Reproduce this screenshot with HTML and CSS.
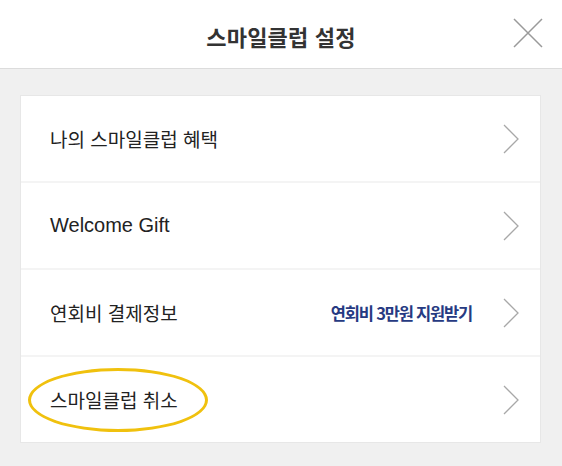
FILE: index.html
```html
<!DOCTYPE html>
<html lang="ko">
<head>
<meta charset="utf-8">
<title>스마일클럽 설정</title>
<link rel="stylesheet" href="styles.css">
</head>
<body>
<header class="topbar">
  <h1 class="title">스마일클럽 설정</h1>
  <button class="close" aria-label="닫기">
    <svg width="30" height="30" viewBox="0 0 30 30"><path d="M1 1 L29 29 M29 1 L1 29" stroke="#9a9a9a" stroke-width="1.5" fill="none"/></svg>
  </button>
</header>
<main class="content">
  <ul class="card">
    <li class="row">
      <span class="label">나의 스마일클럽 혜택</span>
      <span class="chev"><svg width="16" height="30" viewBox="0 0 16 30"><path d="M1 1 L15 15 L1 29" stroke="#a8a8a8" stroke-width="1.3" fill="none"/></svg></span>
    </li>
    <li class="row">
      <span class="label latin">Welcome Gift</span>
      <span class="chev"><svg width="16" height="30" viewBox="0 0 16 30"><path d="M1 1 L15 15 L1 29" stroke="#a8a8a8" stroke-width="1.3" fill="none"/></svg></span>
    </li>
    <li class="row">
      <span class="label">연회비 결제정보</span>
      <span class="promo">연회비 3만원 지원받기</span>
      <span class="chev"><svg width="16" height="30" viewBox="0 0 16 30"><path d="M1 1 L15 15 L1 29" stroke="#a8a8a8" stroke-width="1.3" fill="none"/></svg></span>
    </li>
    <li class="row marked">
      <span class="label">스마일클럽 취소</span>
      <span class="ring"></span>
      <span class="chev"><svg width="16" height="30" viewBox="0 0 16 30"><path d="M1 1 L15 15 L1 29" stroke="#a8a8a8" stroke-width="1.3" fill="none"/></svg></span>
    </li>
  </ul>
</main>
</body>
</html>
```

FILE: styles.css
```css
* { box-sizing: border-box; }
html, body {
  margin: 0;
  padding: 0;
  height: 100%;
}
body {
  background: #f0f0f0;
  font-family: "Liberation Sans", "Noto Sans CJK KR", sans-serif;
  color: #222;
}
.topbar {
  height: 69px;
  background: #fff;
  border-bottom: 1px solid #dcdcdc;
  display: flex;
  align-items: center;
  justify-content: center;
  position: relative;
  padding-top: 3px;
}
.title {
  margin: 0;
  font-family: "Noto Sans CJK KR", sans-serif;
  font-size: 22px;
  font-weight: 700;
  color: #333;
  letter-spacing: 0.2px;
}
.close {
  position: absolute;
  right: 19px;
  top: 18px;
  width: 30px;
  height: 30px;
  padding: 0;
  border: 0;
  background: none;
  display: flex;
}
.content {
  padding: 27px 22px 0 21px;
}
.card {
  list-style: none;
  margin: 0;
  padding: 0;
  background: #fff;
  box-shadow: 0 0 0 1px #e7e7e7;
}
.row {
  height: 85px;
  display: flex;
  align-items: center;
  padding: 0 21px 0 29px;
  position: relative;
}
.row + .row {
  height: 87px;
  border-top: 2px solid #f4f4f4;
}
.label {
  flex: 1;
  font-family: "Noto Sans CJK KR", sans-serif;
  font-size: 19px;
  color: #222;
}
.label.latin {
  font-family: "Liberation Sans", Arial, sans-serif;
  font-size: 20px;
}
.promo {
  font-family: "Noto Sans CJK KR", sans-serif;
  font-weight: 700;
  font-size: 16.5px;
  letter-spacing: -1.2px;
  color: #263a82;
  margin-right: 31px;
}
.chev {
  display: flex;
  width: 16px;
  height: 30px;
}
.ring {
  position: absolute;
  left: 7px;
  top: 11px;
  width: 180px;
  height: 64px;
  border: 3px solid #f0c10e;
  border-radius: 50%;
  pointer-events: none;
}
```
